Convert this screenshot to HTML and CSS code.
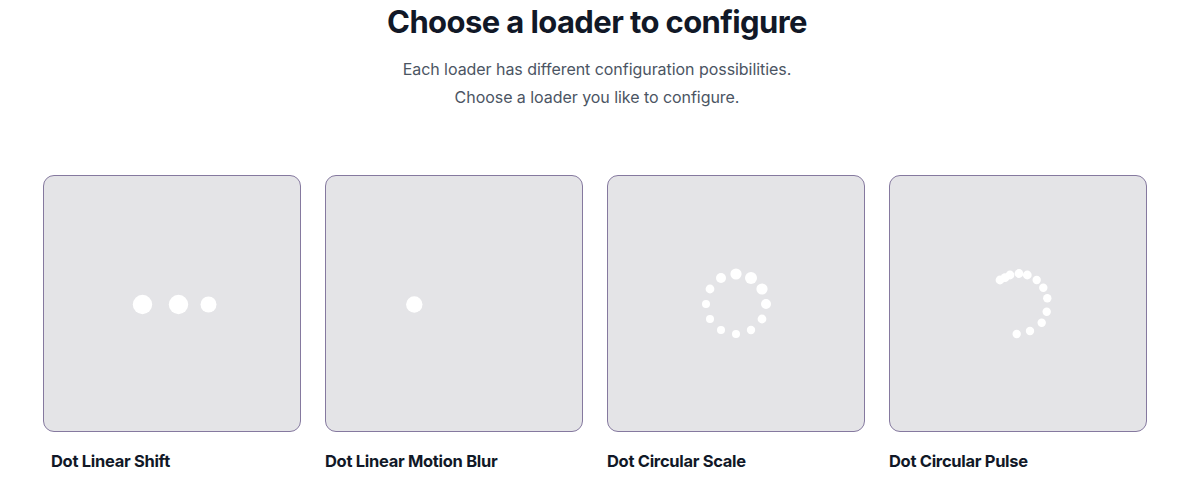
FILE: index.html
```html
<!DOCTYPE html>
<html lang="en">
<head>
    <meta charset="UTF-8">
    <title>Choose a loader</title>
    <link rel="stylesheet" href="styles.css">
</head>
<body>
    <div class="intro">
        <h1 class="intro-title">Choose a loader to configure</h1>
        <p class="intro-text">Each loader has different configuration possibilities.<br>Choose a loader you like to configure.</p>
    </div>

    <div class="loaders">
        <div class="loader">
            <div class="loader-box">
                <svg class="loader-art" width="100" height="100" viewBox="-50 -50 100 100">
                    <circle cx="-29.5" cy="0.5" r="9.7" />
                    <circle cx="6.5" cy="0.5" r="9.7" />
                    <circle cx="36.5" cy="0.5" r="8" />
                </svg>
            </div>
            <div class="loader-name loader-name-indent">Dot Linear Shift</div>
        </div>
        <div class="loader">
            <div class="loader-box">
                <svg class="loader-art" width="100" height="100" viewBox="-50 -50 100 100">
                    <circle cx="-39.7" cy="0.5" r="8.2" />
                </svg>
            </div>
            <div class="loader-name">Dot Linear Motion Blur</div>
        </div>
        <div class="loader">
            <div class="loader-box">
                <svg class="loader-art" width="100" height="100" viewBox="-50 -50 100 100">
                    <circle cx="0" cy="-30" r="5.6" />
                    <circle cx="15" cy="-26" r="6" />
                    <circle cx="26" cy="-15" r="5.6" />
                    <circle cx="30" cy="0" r="5" />
                    <circle cx="26" cy="15" r="4.4" />
                    <circle cx="15" cy="26" r="4.2" />
                    <circle cx="0" cy="30" r="4" />
                    <circle cx="-15" cy="26" r="4" />
                    <circle cx="-26" cy="15" r="4" />
                    <circle cx="-30" cy="0" r="4" />
                    <circle cx="-26" cy="-15" r="4.4" />
                    <circle cx="-15" cy="-26" r="5" />
                </svg>
            </div>
            <div class="loader-name">Dot Circular Scale</div>
        </div>
        <div class="loader">
            <div class="loader-box">
                <svg class="loader-art" width="100" height="100" viewBox="-50 -50 100 100">
                    <circle cx="-18" cy="-24" r="4.4" />
                    <circle cx="-13" cy="-26.3" r="4.4" />
                    <circle cx="-8" cy="-29" r="4.4" />
                    <circle cx="1" cy="-30.5" r="4.4" />
                    <circle cx="9.3" cy="-29" r="4.4" />
                    <circle cx="18.7" cy="-24" r="4.2" />
                    <circle cx="25.3" cy="-16.3" r="4.2" />
                    <circle cx="29.3" cy="-5.7" r="4.2" />
                    <circle cx="28.7" cy="7.7" r="4.2" />
                    <circle cx="23.7" cy="18.7" r="4.2" />
                    <circle cx="12" cy="27" r="4.2" />
                    <circle cx="-1.3" cy="30" r="4.2" />
                </svg>
            </div>
            <div class="loader-name">Dot Circular Pulse</div>
        </div>
    </div>
</body>
</html>
```

FILE: styles.css
```css
body {
    margin: 0;
    font-family: Inter, "Noto Sans", sans-serif;
    background-color: #ffffff;
    color: #111827;
}
.intro {
    text-align: center;
    padding-top: 2px;
}
.intro-title {
    margin: 0;
    font-size: 31px;
    line-height: 40px;
    font-weight: 700;
    letter-spacing: -0.6px;
    color: #111827;
}
.intro-text {
    margin: 13px 0 0 0;
    font-size: 16px;
    line-height: 28px;
    letter-spacing: -0.05px;
    color: #4b5563;
}
.loaders {
    display: grid;
    grid-template-columns: repeat(4, 258px);
    gap: 24px;
    padding: 0 0 0 43px;
    margin-top: 64px;
}
.loader-box {
    height: 257px;
    box-sizing: border-box;
    background-color: #e4e4e7;
    border: 1px solid #85799f;
    border-radius: 11px;
    display: flex;
    align-items: center;
    justify-content: center;
}
.loader-art circle {
    fill: #ffffff;
}
.loader-name {
    margin-top: 17px;
    font-size: 16.5px;
    line-height: 24px;
    font-weight: 700;
    letter-spacing: -0.3px;
    color: #111827;
}
.loader-name-indent {
    padding-left: 8px;
}
```
